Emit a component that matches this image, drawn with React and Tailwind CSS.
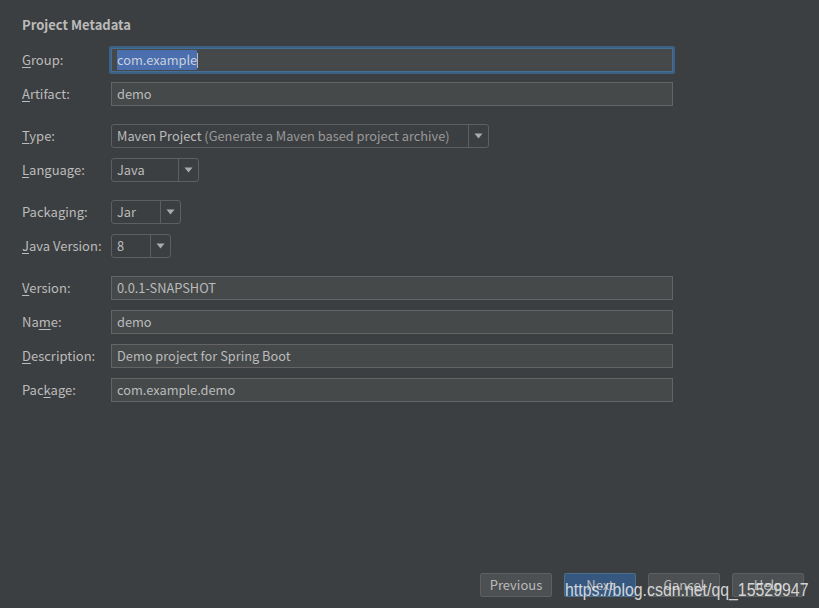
import React from 'react'

const FONT = { fontFamily: '"Noto Sans CJK SC", "Noto Sans", sans-serif' }

function Label({ text, u }) {
  // u = index of mnemonic letter
  return (
    <div className="w-[89px] shrink-0 text-[13px] text-[#bbbbbb]">
      {text.slice(0, u)}
      <span className="underline underline-offset-2">{text[u]}</span>
      {text.slice(u + 1)}
    </div>
  )
}

function Field({ value, focused }) {
  if (focused) {
    return (
      <div className="ml-[-2px] rounded-[2px] border-2 border-[#3d6185] p-0">
        <div className="flex h-[24px] w-[562px] items-center border border-[#466d94] bg-[#45494a] px-[5px] text-[12.8px] text-[#bbbbbb]">
          <span className="bg-[#4b6eaf] text-[#c8d0dc]">{value}</span>
          <span className="h-[15px] w-px bg-[#bbbbbb]" />
        </div>
      </div>
    )
  }
  return (
    <div className="flex h-[24px] w-[562px] items-center border border-[#646464] bg-[#45494a] px-[5px] text-[12.8px] text-[#bbbbbb]">
      {value}
    </div>
  )
}

function Arrow() {
  return (
    <svg width="9" height="6" viewBox="0 0 9 6">
      <path d="M0.5 0.5 L8.5 0.5 L4.5 5.5 Z" fill="#a9abad" />
    </svg>
  )
}

function Combo({ width, children }) {
  return (
    <div
      className="flex h-[24px] items-stretch rounded-[3px] border border-[#5e6060] bg-[#3c3f41] text-[12.8px] text-[#bbbbbb]"
      style={{ width }}
    >
      <div className="flex flex-1 items-center overflow-hidden whitespace-pre px-[5px]">{children}</div>
      <div className="flex w-[20px] items-center justify-center border-l border-[#5e6060]">
        <Arrow />
      </div>
    </div>
  )
}

function Row({ label, u, mt, children }) {
  return (
    <div className="flex items-center" style={{ marginTop: mt }}>
      <Label text={label} u={u} />
      {children}
    </div>
  )
}

function Button({ children, primary }) {
  return (
    <div
      className={
        'flex h-[24px] w-[72px] items-center justify-center rounded-[2px] border text-[13px] text-[#bbbbbb] ' +
        (primary ? 'border-[#4c708c] bg-[#365880]' : 'border-[#5e6060] bg-[#4c5052]')
      }
    >
      {children}
    </div>
  )
}

export default function App() {
  return (
    <div className="relative flex h-[608px] w-[819px] flex-col bg-[#3c3f41] px-[22px]" style={FONT}>
      <div className="mt-[16px] h-[18px] text-[13px] font-bold leading-[18px] text-[#bbbbbb]">Project Metadata</div>

      <Row label="Group:" u={0} mt={12}>
        <Field value="com.example" focused />
      </Row>
      <Row label="Artifact:" u={0} mt={8}>
        <Field value="demo" />
      </Row>

      <Row label="Type:" u={0} mt={18}>
        <Combo width={378}>
          {'Maven Project '}<span className="text-[#999999]">(Generate a Maven based project archive)</span>
        </Combo>
      </Row>
      <Row label="Language:" u={0} mt={10}>
        <Combo width={88}>Java</Combo>
      </Row>

      <Row label="Packaging:" u={5} mt={18}>
        <Combo width={70}>Jar</Combo>
      </Row>
      <Row label="Java Version:" u={0} mt={10}>
        <Combo width={60}>8</Combo>
      </Row>

      <Row label="Version:" u={0} mt={18}>
        <Field value="0.0.1-SNAPSHOT" />
      </Row>
      <Row label="Name:" u={2} mt={10}>
        <Field value="demo" />
      </Row>
      <Row label="Description:" u={0} mt={10}>
        <Field value="Demo project for Spring Boot" />
      </Row>
      <Row label="Package:" u={3} mt={10}>
        <Field value="com.example.demo" />
      </Row>

      <div className="mt-auto mb-[11px] mr-[-7px] flex justify-end gap-[12px]">
        <Button>Previous</Button>
        <Button primary>Next</Button>
        <Button>Cancel</Button>
        <Button>Help</Button>
      </div>

      <div
        className="absolute left-[565px] top-[580px] origin-left scale-x-[0.835] whitespace-nowrap text-[19px] leading-[19px] text-[#e6e6e6]/90"
        style={{ fontFamily: '"Liberation Sans", Arial, sans-serif' }}
      >
        https://blog.csdn.net/qq_15529947
      </div>
    </div>
  )
}
